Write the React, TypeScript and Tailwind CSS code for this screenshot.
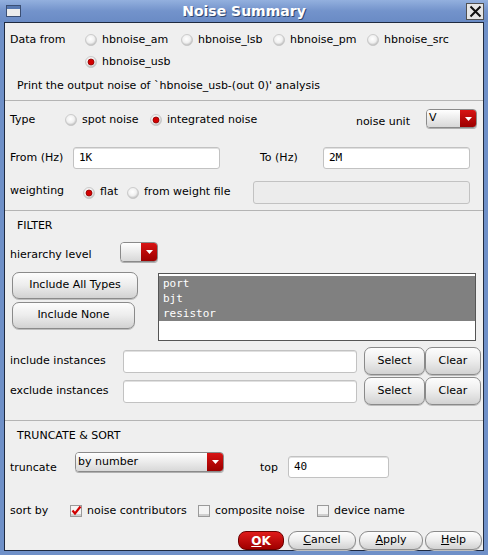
import React from "react"

const sans = "font-['DejaVu_Sans',sans-serif]"
const mono = "font-['DejaVu_Sans_Mono',monospace]"

function Radio({ checked }: { checked?: boolean }) {
  return (
    <svg width="12" height="12" viewBox="0 0 12 12" className="shrink-0">
      <defs>
        <radialGradient id="rg" cx="0.45" cy="0.4" r="0.6">
          <stop offset="0" stopColor="#ffffff" />
          <stop offset="0.6" stopColor="#f0f0f0" />
          <stop offset="1" stopColor="#b9b9b9" />
        </radialGradient>
      </defs>
      <circle cx="6" cy="6" r="5.5" fill="url(#rg)" stroke="#c4c4c4" strokeWidth="0.8" />
      {checked && <circle cx="6" cy="6" r="3" fill="#d40000" stroke="#8a0000" strokeWidth="0.8" />}
    </svg>
  )
}

function Check({ checked }: { checked?: boolean }) {
  return (
    <svg width="12" height="12" viewBox="0 0 12 12" className="shrink-0">
      <rect x="0.5" y="0.5" width="11" height="11" fill="#f4f4f4" stroke="#9a9a9a" />
      <rect x="1" y="9" width="10" height="2" fill="#cfcfcf" />
      {checked && <path d="M2.5 5.5 L5 8.5 L10.5 1.5" fill="none" stroke="#d00000" strokeWidth="2.2" />}
    </svg>
  )
}

function Btn({ children, className = "" }: { children: React.ReactNode; className?: string }) {
  return (
    <div
      className={`flex items-center justify-center rounded-[7px] border border-[#8a8a8a] bg-linear-to-b from-[#fdfdfd] via-[#ececec] to-[#d2d2d2] text-[11px] text-black shadow-[0_1px_0_#bdbdbd] ${className}`}
    >
      {children}
    </div>
  )
}

function Combo({ value, className = "" }: { value?: string; className?: string }) {
  return (
    <div className={`flex overflow-hidden rounded-[4px] border border-[#8a8a8a] shadow-[0_1px_0_#b0b0b0] ${className}`}>
      <div className="flex flex-1 items-center bg-linear-to-b from-[#ffffff] to-[#d8d8d8] pl-[2px] text-[11px] text-black">
        {value}
      </div>
      <div className="flex w-[16px] items-center justify-center bg-linear-to-b from-[#d81414] to-[#9c0000]">
        <svg width="7" height="4" viewBox="0 0 7 4">
          <path d="M0 0 H7 L3.5 4 Z" fill="#ffffff" />
        </svg>
      </div>
    </div>
  )
}

function Field({ value, className = "", disabled }: { value?: string; className?: string; disabled?: boolean }) {
  return (
    <div
      className={`flex shrink-0 items-center rounded-[3px] border border-[#c2c2c2] pl-[5px] text-[11px] text-black ${mono} ${
        disabled ? "bg-[#ececec]" : "bg-white shadow-[inset_0_1px_0_#e0e0e0]"
      } ${className}`}
    >
      {value}
    </div>
  )
}

function Opt({ checked, label, w }: { checked?: boolean; label: string; w: string }) {
  return (
    <div className={`flex shrink-0 items-center gap-[5px] ${w}`}>
      <Radio checked={checked} />
      <span>{label}</span>
    </div>
  )
}

export default function App() {
  return (
    <div className={`flex h-[555px] w-[488px] flex-col bg-[#6f90c8] ${sans} text-[11px] text-black`}>
      {/* title bar */}
      <div className="relative flex h-[22px] items-center justify-center bg-linear-to-b from-[#93b0de] via-[#7393cb] to-[#6a8bc5]">
        <div className="absolute left-[6px] top-[5px] h-[12px] w-[15px] border border-[#3b4f74] bg-[#ececec]">
          <div className="h-[3px] bg-[#5778b0]" />
        </div>
        <span className="text-[14px] font-bold text-white [text-shadow:1px_1px_0_#31486f]">Noise Summary</span>
        <div className="absolute right-[4px] top-[3px] flex h-[17px] w-[18px] items-center justify-center border border-[#505050] bg-[#e6e6e6]">
          <svg width="13" height="13" viewBox="0 0 13 13">
            <path d="M1.5 1.5 L11.5 11.5 M11.5 1.5 L1.5 11.5" stroke="#111" strokeWidth="2" />
          </svg>
        </div>
      </div>

      <div className="mx-[4px] flex h-[529px] flex-col border border-[#1f2a40] bg-[#efefef]">
        {/* data from */}
        <div className="h-[78px] border-b border-[#b4b4b4]">
          <div className="mt-[7px] flex h-[20px] items-center pl-[5px]">
            <span className="w-[75px] shrink-0">Data from</span>
            <Opt label="hbnoise_am" w="w-[96px]" />
            <Opt label="hbnoise_lsb" w="w-[92px]" />
            <Opt label="hbnoise_pm" w="w-[94px]" />
            <Opt label="hbnoise_src" w="w-[100px]" />
          </div>
          <div className="mt-[2px] flex h-[20px] items-center pl-[80px]">
            <Opt checked label="hbnoise_usb" w="w-[100px]" />
          </div>
          <div className="mt-[5px] flex h-[18px] items-center pl-[12px]">
            Print the output noise of `hbnoise_usb-(out 0)' analysis
          </div>
        </div>

        {/* type */}
        <div className="h-[110px] border-b border-[#b4b4b4]">
          <div className="mt-[8px] flex h-[22px] items-center pl-[5px] pr-[6px]">
            <span className="w-[55px] shrink-0">Type</span>
            <Opt label="spot noise" w="w-[85px]" />
            <Opt checked label="integrated noise" w="w-[120px]" />
            <span className="ml-auto mr-[16px] mt-[4px]">noise unit</span>
            <Combo value="V" className="h-[19px] w-[51px] self-start" />
          </div>
          <div className="mt-[16px] flex h-[22px] items-center pl-[5px]">
            <span className="w-[63px] shrink-0">From (Hz)</span>
            <Field value="1K" className="h-[22px] w-[147px]" />
            <span className="ml-[40px] w-[63px] shrink-0">To (Hz)</span>
            <Field value="2M" className="h-[22px] w-[147px]" />
          </div>
          <div className="mt-[12px] flex h-[23px] items-center pl-[5px]">
            <span className="w-[73px] shrink-0 self-start pt-[2px]">weighting</span>
            <Opt checked label="flat" w="w-[44px]" />
            <Opt label="from weight file" w="w-[126px]" />
            <Field disabled className="h-[23px] w-[217px]" />
          </div>
        </div>

        {/* filter */}
        <div className="h-[210px] border-b border-[#b4b4b4]">
          <div className="mt-[7px] flex h-[16px] items-center pl-[12px]">FILTER</div>
          <div className="mt-[8px] flex h-[20px] pl-[5px]">
            <span className="w-[110px] shrink-0 self-end leading-[14px]">hierarchy level</span>
            <Combo className="h-[20px] w-[38px]" />
          </div>
          <div className="mt-[10px] flex h-[69px]">
            <div className="flex w-[153px] shrink-0 flex-col gap-[3px] pl-[7px]">
              <Btn className="h-[27px] w-[126px]">Include All Types</Btn>
              <Btn className="h-[27px] w-[123px]">Include None</Btn>
            </div>
            <div className={`mt-[1px] h-[68px] w-[318px] border border-[#555] bg-white pt-[2px] text-[11px] leading-[15px] text-white ${mono}`}>
              <div className="bg-[#808080] pl-[4px]">port</div>
              <div className="bg-[#808080] pl-[4px]">bjt</div>
              <div className="bg-[#808080] pl-[4px]">resistor</div>
            </div>
          </div>
          <div className="mt-[6px] flex h-[28px] items-center pl-[5px]">
            <span className="w-[113px] shrink-0">include instances</span>
            <Field className="h-[23px] w-[234px]" />
            <Btn className="ml-[7px] h-[28px] w-[61px]">Select</Btn>
            <Btn className="h-[28px] w-[56px]">Clear</Btn>
          </div>
          <div className="mt-[2px] flex h-[28px] items-center pl-[5px]">
            <span className="w-[113px] shrink-0">exclude instances</span>
            <Field className="h-[23px] w-[234px]" />
            <Btn className="ml-[7px] h-[28px] w-[61px]">Select</Btn>
            <Btn className="h-[28px] w-[56px]">Clear</Btn>
          </div>
        </div>

        {/* truncate & sort */}
        <div className="flex-1">
          <div className="mt-[7px] flex h-[16px] items-center pl-[12px]">TRUNCATE &amp; SORT</div>
          <div className="mt-[8px] flex h-[26px] items-start pl-[5px]">
            <span className="mt-[8px] w-[65px] shrink-0">truncate</span>
            <Combo value="by number" className="h-[20px] w-[149px]" />
            <span className="ml-[36px] mt-[8px] w-[28px] shrink-0">top</span>
            <Field value="40" className="mt-[4px] h-[22px] w-[101px]" />
          </div>
          <div className="mt-[24px] flex h-[18px] items-center pl-[5px]">
            <span className="w-[60px] shrink-0">sort by</span>
            <div className="flex w-[128px] shrink-0 items-center gap-[5px]">
              <Check checked />
              <span>noise contributors</span>
            </div>
            <div className="flex w-[119px] shrink-0 items-center gap-[5px]">
              <Check />
              <span>composite noise</span>
            </div>
            <div className="flex items-center gap-[5px]">
              <Check />
              <span>device name</span>
            </div>
          </div>
          <div className="mt-[11px] flex h-[19px] justify-end pr-[1px]">
            <div className="flex h-[19px] w-[46px] items-center justify-center rounded-[8px] border border-[#6a0000] bg-linear-to-b from-[#e01a1a] to-[#a00000] text-[12px] font-bold text-white">
              <span className="underline">O</span>K
            </div>
            <Btn className="ml-[4px] h-[19px] w-[68px] rounded-[9px]">
              <span className="underline">C</span>ancel
            </Btn>
            <Btn className="ml-[3px] h-[19px] w-[64px] rounded-[9px]">
              <span className="underline">A</span>pply
            </Btn>
            <Btn className="ml-[2px] h-[19px] w-[57px] rounded-[9px]">
              <span className="underline">H</span>elp
            </Btn>
          </div>
        </div>
      </div>
    </div>
  )
}
